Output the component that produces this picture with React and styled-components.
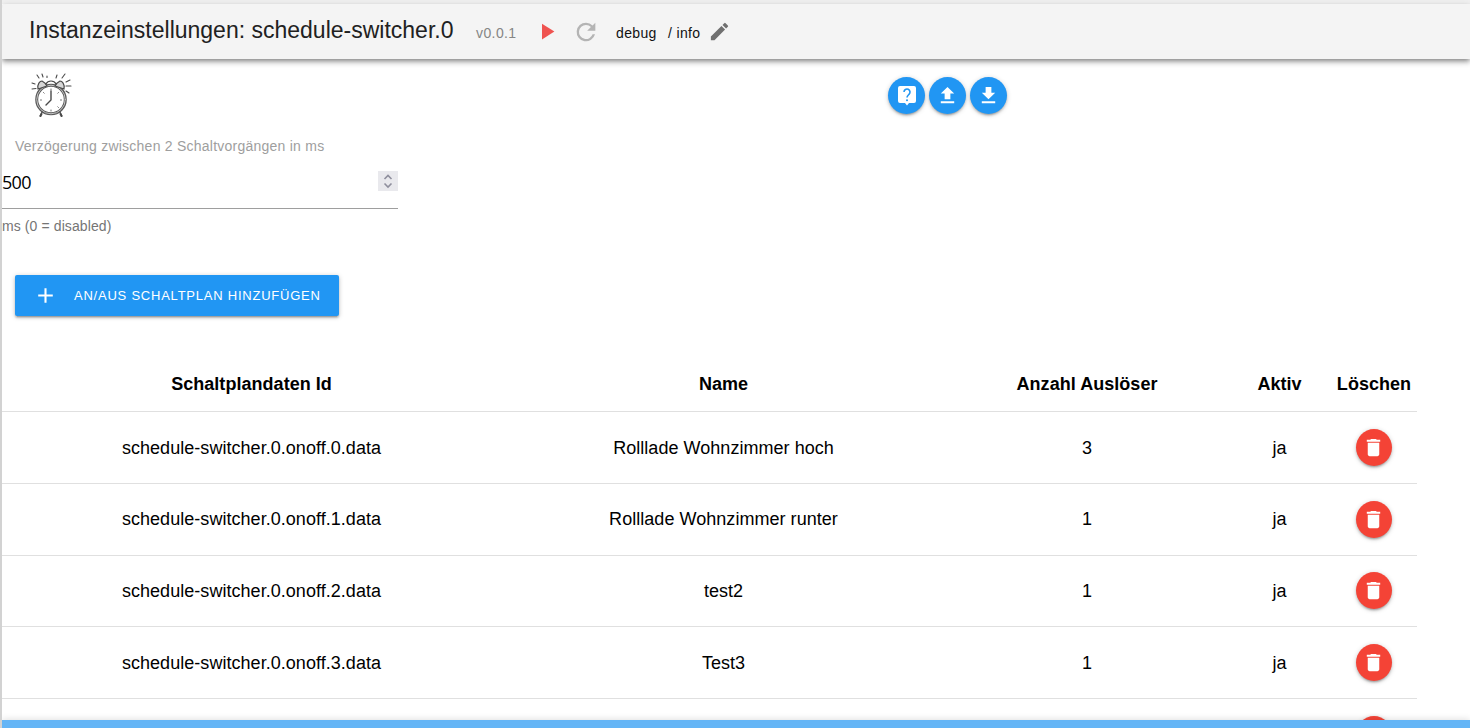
import React from "react";
import styled, { createGlobalStyle } from "styled-components";

const Global = createGlobalStyle`
  * { box-sizing: border-box; }
  html, body { margin: 0; padding: 0; overflow: hidden; }
  body { background: #fff; font-family: "Liberation Sans", Arial, sans-serif; color: #000; }
`;

const Page = styled.div`
  height: 728px;
  display: flex;
  flex-direction: column;
  border-left: 2px solid #d2d2d2;
  overflow: hidden;
`;
const Strip = styled.div`
  flex: none;
  height: 4px;
  margin-left: -2px;
  background: #f1f1f1;
`;
const Header = styled.header`
  flex: none;
  height: 55px;
  display: flex;
  align-items: center;
  padding-left: 27px;
  background: #f4f4f4;
  border-top-left-radius: 4px;
  box-shadow: 0 2px 4px -1px rgba(0,0,0,.35), 0 4px 5px rgba(0,0,0,.18), 0 1px 10px rgba(0,0,0,.1);
`;
const Title = styled.h1`
  margin: 0;
  width: 447px;
  font-size: 23px;
  line-height: 28px;
  font-weight: 400;
  color: #212121;
  white-space: nowrap;
  padding-bottom: 4px;
`;
const Version = styled.span`
  width: 57px;
  padding-top: 2px;
  font-size: 14px;
  letter-spacing: 0.4px;
  color: #858585;
`;
const Level = styled.span`
  width: ${(p) => p.$width};
  padding-top: 2px;
  font-size: 14px;
  color: #111;
  white-space: nowrap;
  letter-spacing: 0.35px;
`;
const Icon = styled.svg`
  display: block;
  flex: none;
  width: ${(p) => p.$size || 24}px;
  height: ${(p) => p.$size || 24}px;
  margin-right: ${(p) => p.$gap || 0}px;
  fill: ${(p) => p.$color || "#fff"};
`;
const Toolbar = styled.div`
  flex: none;
  height: 78px;
  display: flex;
  align-items: flex-start;
  padding: 12px 0 0 27px;
`;
const Clock = styled.svg`
  width: 44px;
  height: 48px;
  margin-top: 1px;
  fill: none;
  stroke: #4a4a4a;
  stroke-linecap: round;
`;
const Actions = styled.div`
  display: flex;
  gap: 4px;
  margin: 6px 0 0 815px;
`;
const RoundButton = styled.button`
  flex: none;
  display: flex;
  align-items: center;
  justify-content: center;
  width: ${(p) => (p.$danger ? 36 : 37)}px;
  height: 37px;
  padding: 0;
  border: 0;
  border-radius: 50%;
  background: ${(p) => (p.$danger ? "#f44336" : "#2196f3")};
  box-shadow: 0 2px 2px rgba(0,0,0,.14), 0 3px 1px -2px rgba(0,0,0,.12), 0 1px 5px rgba(0,0,0,.2);
`;
const Field = styled.div`
  flex: none;
  width: 396px;
  height: 138px;
`;
const Label = styled.label`
  display: block;
  padding-left: 13px;
  font-size: 14px;
  line-height: 18px;
  color: #9e9e9e;
  white-space: nowrap;
  letter-spacing: 0.24px;
`;
const InputLine = styled.div`
  display: flex;
  justify-content: space-between;
  height: 54px;
  padding-top: 16px;
  border-bottom: 1px solid #9e9e9e;
  font: 18px/22px "Open Sans", "Noto Sans", sans-serif;
  letter-spacing: -0.7px;
`;
const Spinner = styled.span`
  display: flex;
  width: 20px;
  height: 20px;
  background: #e9e9ed;
`;
const Hint = styled.div`
  padding-top: 8px;
  font-size: 14px;
  line-height: 18px;
  color: #757575;
  letter-spacing: 0.1px;
`;
const AddButton = styled.button`
  flex: none;
  display: flex;
  align-items: center;
  width: 324px;
  height: 41px;
  margin-left: 13px;
  padding: 0 0 1px 18px;
  border: 0;
  border-radius: 2px;
  background: #2196f3;
  color: #fff;
  font: 13px "Liberation Sans", Arial, sans-serif;
  white-space: nowrap;
  letter-spacing: 0.77px;
  box-shadow: 0 2px 2px rgba(0,0,0,.16), 0 3px 1px -2px rgba(0,0,0,.14), 0 1px 5px rgba(0,0,0,.22);
`;
const Grid = styled.div`
  flex: 1;
  min-height: 0;
  overflow: hidden;
  padding-top: 41px;
`;
const Row = styled.div`
  display: grid;
  grid-template-columns: 499px 445px 282px 103px 86px;
  align-items: center;
  justify-items: center;
  width: 1415px;
  height: ${(p) => (p.$head ? 55 : 71.75)}px;
  border-bottom: 1px solid #e0e0e0;
  font-size: 18px;
  font-weight: ${(p) => (p.$head ? 700 : 400)};
  white-space: nowrap;
  letter-spacing: 0.04px;
`;
const Cell = styled.span`
  padding-top: 1.500px;
`;
const Footer = styled.footer`
  flex: none;
  height: 8px;
  background: #64b5f6;
  box-shadow: 0 -1px 6px rgba(0,0,0,.12);
  z-index: 1;
`;

const TRASH = "M6 19c0 1.100.9 2 2 2h8c1.100 0 2-.9 2-2V7H6v12zM19 4h-3.500l-1-1h-5l-1 1H5v2h14V4z";
const rows = [
  ["schedule-switcher.0.onoff.0.data", "Rolllade Wohnzimmer hoch", 3],
  ["schedule-switcher.0.onoff.1.data", "Rolllade Wohnzimmer runter", 1],
  ["schedule-switcher.0.onoff.2.data", "test2", 1],
  ["schedule-switcher.0.onoff.3.data", "Test3", 1],
  ["", "", ""],
];

function AlarmClock() {
  return (
    <Clock viewBox="0 0 44 48">
      <circle cx="22" cy="27.500" r="14.300" strokeWidth="3" stroke="#5a5a5a" />
      <circle cx="22" cy="27.500" r="14.300" strokeWidth="1" stroke="#c4c4c4" />
      <path strokeWidth="1.400" d="M22 28V19M22 28l-5 5" />
      <path strokeWidth=".8" d="M22 17v1M22 38v1M11.500 28h1M31.500 28h1M29.500 20.500l-.7.7M14.500 20.500l.7.7M29.500 35.500l-.7-.7" />
      <path strokeWidth="1.200" fill="#d6d6d6" d="M9 17c-1-5 2-8 4-8 2 1 4 3 5 5zM35 17c1-5-2-8-4-8-2 1-4 3-5 5z" />
      <path strokeWidth="1.100" d="M17 12c2-4 8-4 10 0M13 40l-2 4M31 40l2 4" />
      <path strokeWidth="2" d="M12.500 42l-1 2M31.500 42l1 2" />
      <path strokeWidth="1.100" d="M3 17l4-.5M3 11l3 1M8 3l2 3M13 2l1 3M18 4v1.500M28 3l-1 3M36 2l-3 4M41 8l-4 2M42 14h-5M40 21l-3-2" />
    </Clock>
  );
}

export default function App() {
  return (
    <>
      <Global />
      <Page>
        <Strip />
        <Header>
          <Title>Instanzeinstellungen: schedule-switcher.0</Title>
          <Version>v0.0.1</Version>
          <Icon viewBox="0 0 24 24" $color="#ef5350" $size={27} $gap={12}><path d="M8 5v14l11-7z" /></Icon>
          <Icon viewBox="0 0 24 24" $color="#b4b4b4" $size={28} $gap={16}><path d="M17.650 6.350A7.958 7.958 0 0 0 12 4a8 8 0 1 0 7.730 10h-2.080A6 6 0 1 1 12 6c1.660 0 3.140.69 4.220 1.780L13 11h7V4z" /></Icon>
          <Level $width="52px">debug</Level>
          <Level $width="40px">/ info</Level>
          <Icon viewBox="0 0 24 24" $color="#707070" $size={23}><path d="M3 17.250V21h3.750L17.810 9.940l-3.750-3.750L3 17.250zM20.710 7.040a1 1 0 0 0 0-1.410l-2.340-2.340a1 1 0 0 0-1.410 0l-1.830 1.830 3.750 3.750z" /></Icon>
        </Header>
        <Toolbar>
          <AlarmClock />
          <Actions>
            <RoundButton><Icon viewBox="0 0 24 24"><path d="M5 2h14a2 2 0 0 1 2 2v13a2 2 0 0 1-2 2h-5l-2 2.500L10 19H5a2 2 0 0 1-2-2V4a2 2 0 0 1 2-2z" /><path d="M9 8a3 3 0 1 1 5 2.300C13 11.300 12 12 12 13.500" fill="none" stroke="#2196f3" strokeWidth="1.600" /><circle cx="12" cy="16.200" r="1" fill="#2196f3" /></Icon></RoundButton>
            <RoundButton><Icon viewBox="0 0 24 24" $size={23}><path d="M9 16h6v-6h4l-7-7-7 7h4zM5 18h14v2H5z" /></Icon></RoundButton>
            <RoundButton><Icon viewBox="0 0 24 24" $size={23}><path d="M19 9h-4V3H9v6H5l7 7zM5 18v2h14v-2z" /></Icon></RoundButton>
          </Actions>
        </Toolbar>
        <Field>
          <Label>Verzögerung zwischen 2 Schaltvorgängen in ms</Label>
          <InputLine>
            500
            <Spinner><Icon viewBox="0 0 20 20" $size={20}><path d="M6.500 8L10 4.500 13.500 8M6.500 12.500L10 16l3.500-3.500" fill="none" stroke="#8f8f9d" strokeWidth="1.600" /></Icon></Spinner>
          </InputLine>
          <Hint>ms (0 = disabled)</Hint>
        </Field>
        <AddButton><Icon viewBox="0 0 24 24" $size={25} $gap={16}><path d="M19 13h-6v6h-2v-6H5v-2h6V5h2v6h6z" /></Icon>AN/AUS SCHALTPLAN HINZUFÜGEN</AddButton>
        <Grid>
          <Row $head><span>Schaltplandaten Id</span><span>Name</span><span>Anzahl Auslöser</span><span>Aktiv</span><span>Löschen</span></Row>
          {rows.map(([id, name, count], i) => (
            <Row key={i}>
              <Cell>{id}</Cell><Cell>{name}</Cell><Cell>{count}</Cell><Cell>{id && "ja"}</Cell>
              <RoundButton $danger><Icon viewBox="0 0 24 24" $size={23} $gap={1}><path d={TRASH} /></Icon></RoundButton>
            </Row>
          ))}
        </Grid>
        <Footer />
      </Page>
    </>
  );
}
